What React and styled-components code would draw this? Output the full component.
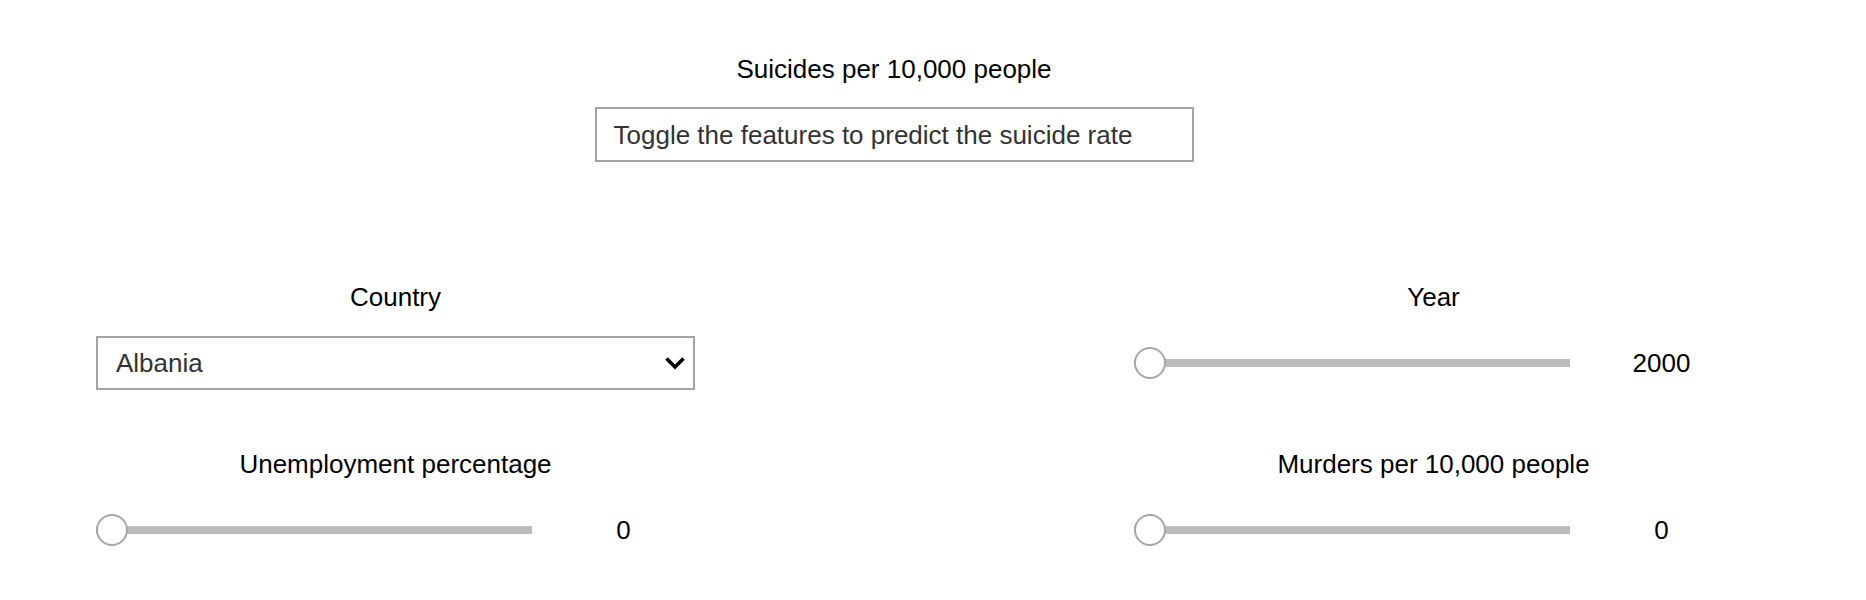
import React, { useState } from 'react';
import styled, { createGlobalStyle } from 'styled-components';

const GlobalStyle = createGlobalStyle`
  body {
    margin: 0;
    background: #ffffff;
    font-family: "Liberation Sans", Arial, Helvetica, sans-serif;
    font-size: 26px;
    color: #000000;
  }
`;

const Page = styled.main`
  width: 1788px;
  padding-top: 54px;
`;

const Header = styled.header`
  display: flex;
  flex-direction: column;
  align-items: center;
`;

const Title = styled.h1`
  margin: 0;
  font-size: 26px;
  font-weight: normal;
  line-height: 30px;
`;

const PredictionBox = styled.div`
  box-sizing: border-box;
  width: 599px;
  height: 55px;
  margin-top: 23px;
  padding: 0 17px;
  display: flex;
  align-items: center;
  border: 2px solid #a3a3a3;
  color: #333333;
  line-height: 30px;
`;

const Features = styled.section`
  display: grid;
  grid-template-columns: 599px 599px;
  column-gap: 439px;
  row-gap: 59px;
  margin-top: 120px;
  padding-left: 96px;
`;

const Field = styled.div`
  display: flex;
  flex-direction: column;
  align-items: center;
  gap: 23px;
`;

const Label = styled.label`
  line-height: 31px;
`;

const SelectWrap = styled.div`
  position: relative;
  width: 100%;
  height: 54px;
`;

const Select = styled.select`
  appearance: none;
  box-sizing: border-box;
  width: 100%;
  height: 100%;
  margin: 0;
  padding: 0 40px 0 18px;
  border: 2px solid #a3a3a3;
  border-radius: 0;
  background: #ffffff;
  color: #333333;
  font-family: inherit;
  font-size: 26px;
  outline: none;
`;

const Chevron = styled.svg`
  position: absolute;
  right: 9px;
  top: 20px;
  width: 22px;
  height: 14px;
  pointer-events: none;
`;

const SliderRow = styled.div`
  width: 100%;
  height: 54px;
  display: flex;
  align-items: center;
`;

const Range = styled.input.attrs({ type: 'range' })`
  appearance: none;
  -webkit-appearance: none;
  width: 436px;
  height: 32px;
  margin: 0;
  background: transparent;
  outline: none;

  &::-webkit-slider-runnable-track {
    height: 8px;
    background: #bcbcbc;
    border: none;
  }

  &::-webkit-slider-thumb {
    -webkit-appearance: none;
    box-sizing: border-box;
    width: 32px;
    height: 32px;
    margin-top: -12px;
    border-radius: 50%;
    border: 2px solid #a6a6a6;
    background: #ffffff;
    cursor: pointer;
  }

  &::-moz-range-track {
    height: 8px;
    background: #bcbcbc;
  }

  &::-moz-range-thumb {
    box-sizing: border-box;
    width: 32px;
    height: 32px;
    border-radius: 50%;
    border: 2px solid #a6a6a6;
    background: #ffffff;
  }
`;

const Value = styled.span`
  flex: 1;
  padding-left: 20px;
  text-align: center;
  line-height: 30px;
`;

const countries = ['Albania', 'Argentina', 'Armenia', 'Australia', 'Austria', 'Belgium', 'Brazil'];

function SliderField({ label, min, max, step, value, onChange }) {
  return (
    <Field>
      <Label>{label}</Label>
      <SliderRow>
        <Range
          min={min}
          max={max}
          step={step}
          value={value}
          onChange={(e) => onChange(Number(e.target.value))}
        />
        <Value>{value}</Value>
      </SliderRow>
    </Field>
  );
}

export default function App() {
  const [country, setCountry] = useState('Albania');
  const [year, setYear] = useState(2000);
  const [unemployment, setUnemployment] = useState(0);
  const [murders, setMurders] = useState(0);

  return (
    <Page>
      <GlobalStyle />
      <Header>
        <Title>Suicides per 10,000 people</Title>
        <PredictionBox>Toggle the features to predict the suicide rate</PredictionBox>
      </Header>
      <Features>
        <Field>
          <Label>Country</Label>
          <SelectWrap>
            <Select value={country} onChange={(e) => setCountry(e.target.value)}>
              {countries.map((c) => (
                <option key={c}>{c}</option>
              ))}
            </Select>
            <Chevron viewBox="0 0 22 14">
              <path d="M2.5 2.5 L11 11 L19.5 2.5" fill="none" stroke="#000" strokeWidth="3.6" />
            </Chevron>
          </SelectWrap>
        </Field>
        <SliderField label="Year" min={2000} max={2016} step={1} value={year} onChange={setYear} />
        <SliderField
          label="Unemployment percentage"
          min={0}
          max={30}
          step={1}
          value={unemployment}
          onChange={setUnemployment}
        />
        <SliderField
          label="Murders per 10,000 people"
          min={0}
          max={10}
          step={1}
          value={murders}
          onChange={setMurders}
        />
      </Features>
    </Page>
  );
}
